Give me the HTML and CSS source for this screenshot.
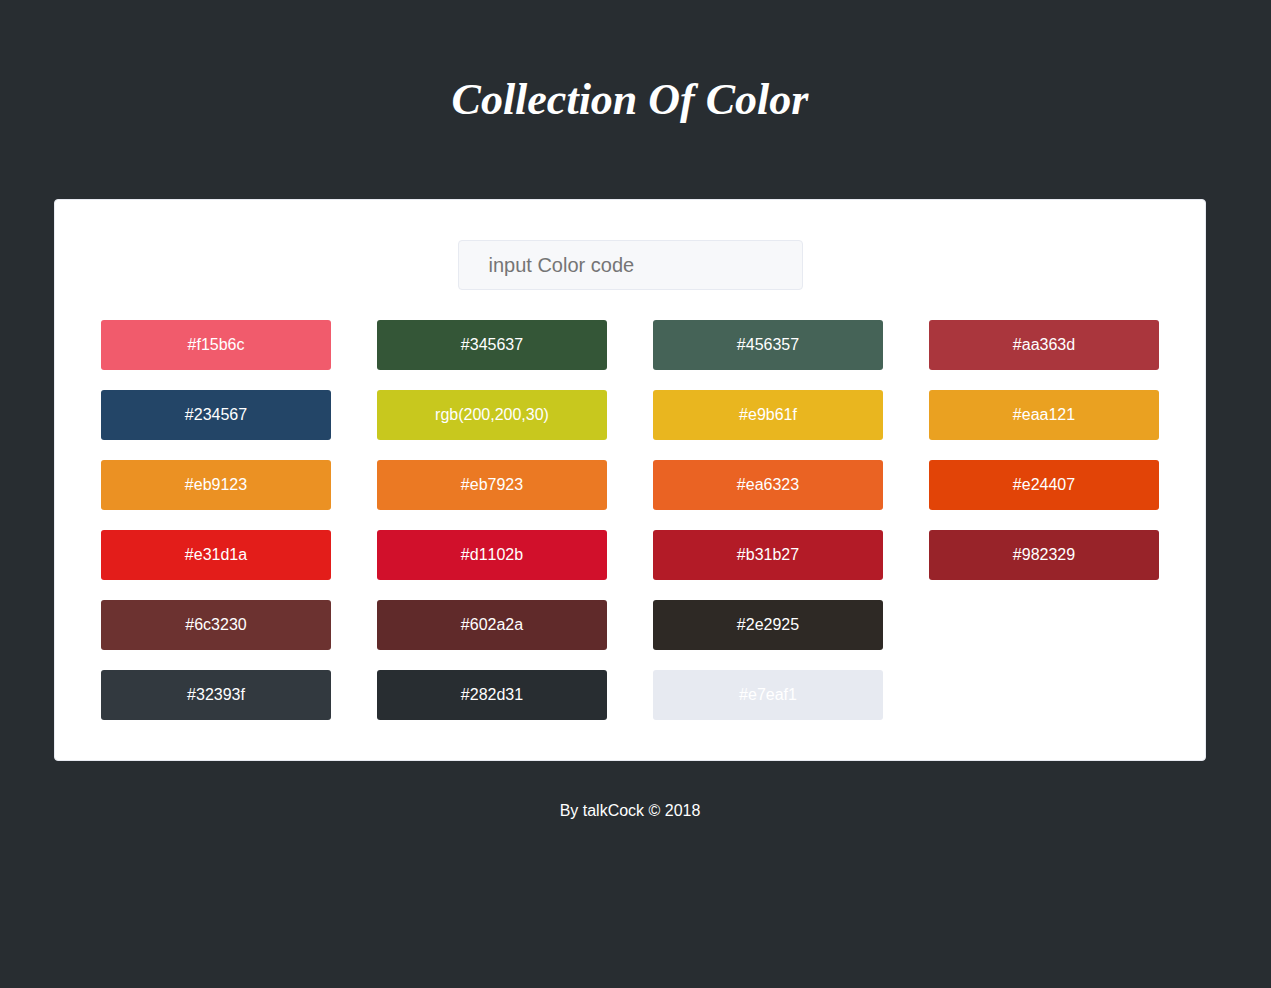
FILE: index.html
```html
<!DOCTYPE html>
<html lang="en">
<head>
<meta charset="utf-8">
<meta name="viewport" content="width=device-width, initial-scale=1">
<title>Collection Of Color</title>
<link rel="stylesheet" href="styles.css">
</head>
<body>
<header class="header"><h1 class="title">Collection Of Color</h1></header>
<main class="card">
<form class="search"><input class="search-input" type="text" placeholder="input Color code" aria-label="input Color code"></form>
<div class="palettes">
<div class="palette">
<button type="button" class="swatch" style="background:#f15b6c">#f15b6c</button>
<button type="button" class="swatch" style="background:#345637">#345637</button>
<button type="button" class="swatch" style="background:#456357">#456357</button>
<button type="button" class="swatch" style="background:#aa363d">#aa363d</button>
<button type="button" class="swatch" style="background:#234567">#234567</button>
<button type="button" class="swatch" style="background:rgb(200,200,30)">rgb(200,200,30)</button>
<button type="button" class="swatch" style="background:#e9b61f">#e9b61f</button>
<button type="button" class="swatch" style="background:#eaa121">#eaa121</button>
<button type="button" class="swatch" style="background:#eb9123">#eb9123</button>
<button type="button" class="swatch" style="background:#eb7923">#eb7923</button>
<button type="button" class="swatch" style="background:#ea6323">#ea6323</button>
<button type="button" class="swatch" style="background:#e24407">#e24407</button>
<button type="button" class="swatch" style="background:#e31d1a">#e31d1a</button>
<button type="button" class="swatch" style="background:#d1102b">#d1102b</button>
<button type="button" class="swatch" style="background:#b31b27">#b31b27</button>
<button type="button" class="swatch" style="background:#982329">#982329</button>
<button type="button" class="swatch" style="background:#6c3230">#6c3230</button>
<button type="button" class="swatch" style="background:#602a2a">#602a2a</button>
<button type="button" class="swatch" style="background:#2e2925">#2e2925</button>
</div>
<div class="palette">
<button type="button" class="swatch" style="background:#32393f">#32393f</button>
<button type="button" class="swatch" style="background:#282d31">#282d31</button>
<button type="button" class="swatch" style="background:#e7eaf1">#e7eaf1</button>
</div>
</div>
</main>
<footer class="footer">By talkCock © 2018</footer>
</body>
</html>
```
FILE: styles.css
```css
* { box-sizing: border-box; }
body {
  margin: 0;
  padding: 0 65px 0 54px;
  background: #282d31;
  color: #fff;
  font: 16px/20px "Liberation Sans", Arial, sans-serif;
  text-align: center;
}
.header { padding: 60px 0; }
.title {
  margin: 0;
  font: italic bold 44px/79px "Liberation Serif", serif;
  white-space: nowrap;
}
.card {
  padding: 40px 46px;
  background: #fff;
  border: 1px solid #e7eaf1;
  border-radius: 4px;
}
.search { margin-bottom: 30px; }
.search-input {
  display: block;
  width: 345px;
  max-width: 100%;
  height: 50px;
  margin: 0 auto;
  padding: 0 30px;
  background: #f7f8fa;
  border: 1px solid #e7eaf1;
  border-radius: 4px;
  color: #282d31;
  font: inherit;
  font-size: 20px;
}
.search-input::placeholder { color: #757575; }
.palettes { display: grid; gap: 20px; }
.palette {
  display: grid;
  grid-template-columns: repeat(4, 1fr);
  gap: 20px 46px;
}
.swatch {
  height: 50px;
  padding: 0;
  border: 0;
  border-radius: 3px;
  color: #fff;
  font: inherit;
  font-kerning: none;
  cursor: pointer;
}
.footer { padding: 40px 0; }
```
